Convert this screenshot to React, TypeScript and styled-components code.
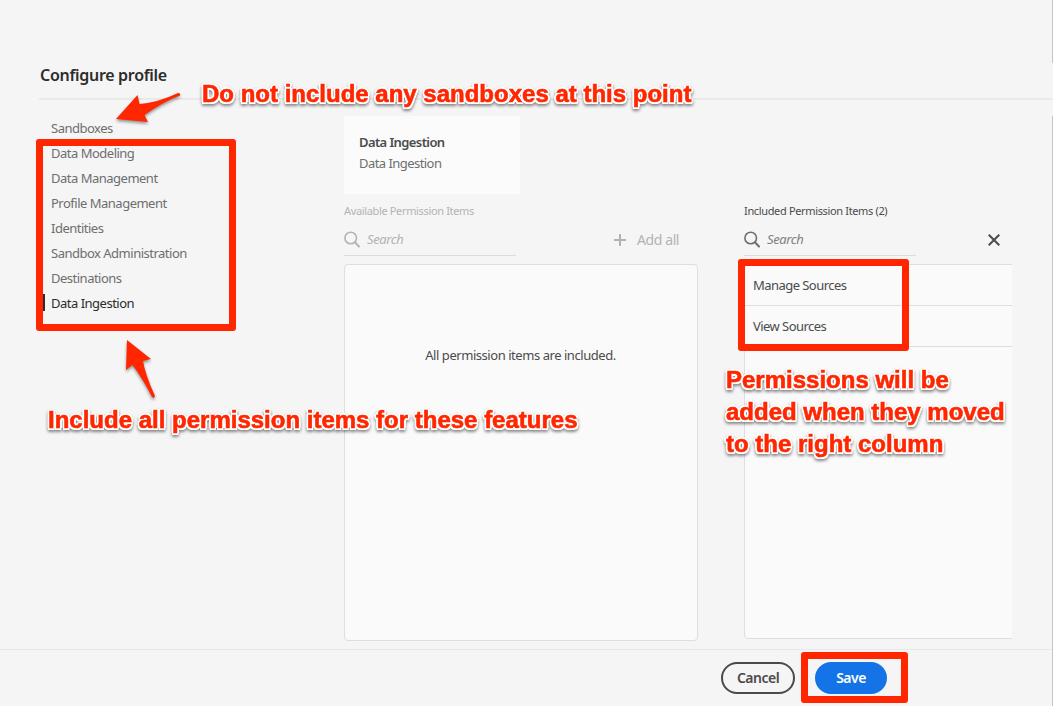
import React from "react";
import styled, { createGlobalStyle } from "styled-components";

const GlobalStyle = createGlobalStyle`
  * { box-sizing: border-box; }
  body { margin: 0; background: #f5f5f5; font-family: "Noto Sans", sans-serif; overflow: hidden; }
`;

const Page = styled.div`
  position: relative;
  display: flex;
  flex-direction: column;
  width: 1053px;
  height: 706px;
  overflow: hidden;
  background: #f5f5f5;
  color: #4b4b4b;
`;

const Header = styled.header`
  flex: none;
  height: 100px;
  margin-left: 39px;
  padding: 64px 0 0 1px;
  border-bottom: 2px solid #e9e9e9;
`;

const Title = styled.h1`
  margin: 0;
  font-size: 16px;
  line-height: 22px;
  font-weight: 600;
  letter-spacing: -0.3px;
  color: #2c2c2c;
`;

const Body = styled.main`
  flex: 1;
  display: flex;
  min-height: 0;
  padding: 16px 41px 0 43px;
`;

const Nav = styled.nav`
  flex: none;
  width: 301px;
  display: flex;
  flex-direction: column;
  align-items: flex-start;
`;

const NavItem = styled.a<{ $active?: boolean }>`
  display: flex;
  align-items: center;
  height: 17px;
  margin-bottom: 8px;
  padding-left: 6px;
  border-left: 2px solid ${(p) => (p.$active ? "#2c2c2c" : "transparent")};
  color: ${(p) => (p.$active ? "#2c2c2c" : "#6e6e6e")};
  font-size: 13px;
  letter-spacing: -0.5px;
  white-space: nowrap;
  &:first-child { margin-top: 3px; }
`;

const Content = styled.section`
  flex: 1;
  min-width: 0;
`;

const Card = styled.div`
  width: 176px;
  height: 78px;
  padding: 16px 15px;
  background: #fbfbfb;
  font-size: 13px;
  line-height: 21px;
  letter-spacing: -0.55px;
  color: #6e6e6e;
`;

const CardTitle = styled.div`
  font-weight: 600;
  letter-spacing: -0.6px;
  color: #4b4b4b;
`;

const Columns = styled.div`
  display: flex;
  gap: 46px;
`;

const Column = styled.div<{ $muted?: boolean }>`
  flex: none;
  width: 354px;
  color: ${(p) => (p.$muted ? "#b3b3b3" : "#4b4b4b")};
`;

const ColumnLabel = styled.div`
  height: 16px;
  margin-top: 9px;
  font-size: 11px;
  line-height: 16px;
  letter-spacing: -0.35px;
`;

const Tools = styled.div`
  display: flex;
  height: 37px;
  margin-bottom: 8px;
`;

const SearchField = styled.label<{ $muted?: boolean }>`
  display: flex;
  align-items: center;
  gap: 7px;
  width: 172px;
  padding-top: 5px;
  border-bottom: 1px solid #dcdcdc;
  font-size: 13px;
  font-style: italic;
  letter-spacing: -0.4px;
  color: ${(p) => (p.$muted ? "#b3b3b3" : "#808080")};
`;

const SearchText = styled.span`
  padding-bottom: 2px;
`;

const ToolAction = styled.div`
  display: flex;
  align-items: center;
  gap: 11px;
  margin-left: 98px;
  padding-top: 4px;
  font-size: 14px;
  letter-spacing: -0.4px;
`;

const ClearAction = styled(ToolAction)`
  margin-left: 72px;
`;

const Panel = styled.div<{ $h: number }>`
  height: ${(p) => p.$h}px;
  border: 1px solid #dedede;
  border-radius: 4px;
  background: #fafafa;
  color: #4b4b4b;
  font-size: 13px;
  letter-spacing: -0.45px;
`;

const Empty = styled.div`
  padding: 81px 1px 0 0;
  line-height: 18px;
  text-align: center;
`;

const Item = styled.div`
  height: 41px;
  padding-left: 8px;
  border-bottom: 1px solid #dedede;
  line-height: 40px;
  letter-spacing: -0.55px;
`;

const Clip = styled.div`
  width: 268px;
  overflow: hidden;
`;

const Footer = styled.footer`
  flex: none;
  display: flex;
  gap: 20px;
  height: 57px;
  padding: 12px 0 0 721px;
  border-top: 1px solid #e8e8e8;
`;

const Button = styled.button<{ $primary?: boolean }>`
  width: ${(p) => (p.$primary ? 72 : 74)}px;
  height: 32px;
  padding: 0;
  border: 2px solid ${(p) => (p.$primary ? "#1473e6" : "#4b4b4b")};
  border-radius: 16px;
  background: ${(p) => (p.$primary ? "#1473e6" : "transparent")};
  color: ${(p) => (p.$primary ? "#fff" : "#4b4b4b")};
  font: 600 14px/26px "Noto Sans", sans-serif;
  letter-spacing: -0.5px;
`;

const WindowEdge = styled.div<{ $y: number; $h: number }>`
  position: absolute;
  right: 0;
  top: ${(p) => p.$y}px;
  width: 1px;
  height: ${(p) => p.$h}px;
  background: #c4c4c4;
`;

const Highlight = styled.div<{ $x: number; $y: number; $w: number; $h: number }>`
  position: absolute;
  left: ${(p) => p.$x}px;
  top: ${(p) => p.$y}px;
  width: ${(p) => p.$w}px;
  height: ${(p) => p.$h}px;
  border: 7px solid #ff2600;
  border-radius: 3px;
`;

const Note = styled.div<{ $x: number; $y: number }>`
  position: absolute;
  left: ${(p) => p.$x}px;
  top: ${(p) => p.$y}px;
  font: 700 24px/32px "Liberation Sans", sans-serif;
  white-space: pre;
  color: #ff2600;
  -webkit-text-stroke: 0.6px #ff2600;
  text-shadow:
    2px 0 0 #fff, -2px 0 0 #fff, 0 2px 0 #fff, 0 -2px 0 #fff,
    1.5px 1.5px 0 #fff, -1.5px 1.5px 0 #fff, 1.5px -1.5px 0 #fff, -1.5px -1.5px 0 #fff;
  filter: drop-shadow(0 2px 1.5px rgba(0, 0, 0, 0.45));
`;

const Arrows = styled.svg`
  position: absolute;
  left: 0;
  top: 0;
  pointer-events: none;
  filter: drop-shadow(0 2px 1.5px rgba(0, 0, 0, 0.4));
`;

const SearchIcon = ({ color }: { color: string }) => (
  <svg width="16" height="17" viewBox="0 0 16 17" fill="none" stroke={color}>
    <circle cx="6.7" cy="7" r="5.8" strokeWidth="1.6" />
    <path d="M10.900 11.200 15 15.500" strokeWidth="2" strokeLinecap="round" />
  </svg>
);

const features = [
  "Sandboxes",
  "Data Modeling",
  "Data Management",
  "Profile Management",
  "Identities",
  "Sandbox Administration",
  "Destinations",
  "Data Ingestion",
];

export default function App() {
  return (
    <Page>
      <GlobalStyle />
      <Header>
        <Title>Configure profile</Title>
      </Header>
      <Body>
        <Nav>
          {features.map((name) => (
            <NavItem key={name} $active={name === "Data Ingestion"}>{name}</NavItem>
          ))}
        </Nav>
        <Content>
          <Card>
            <CardTitle>Data Ingestion</CardTitle>
            Data Ingestion
          </Card>
          <Columns>
            <Column $muted>
              <ColumnLabel>Available Permission Items</ColumnLabel>
              <Tools>
                <SearchField $muted>
                  <SearchIcon color="#b3b3b3" />
                  <SearchText>Search</SearchText>
                </SearchField>
                <ToolAction>
                  <svg width="12" height="12" viewBox="0 0 12 12" stroke="#b3b3b3" strokeWidth="2">
                    <path d="M6 0V12M0 6H12" />
                  </svg>
                  Add all
                </ToolAction>
              </Tools>
              <Panel $h={377}>
                <Empty>All permission items are included.</Empty>
              </Panel>
            </Column>
            <Clip>
              <Column>
                <ColumnLabel>Included Permission Items (2)</ColumnLabel>
                <Tools>
                  <SearchField>
                    <SearchIcon color="#6e6e6e" />
                    <SearchText>Search</SearchText>
                  </SearchField>
                  <ClearAction>
                    <svg width="12" height="12" viewBox="0 0 12 12" stroke="#4b4b4b" strokeWidth="2">
                      <path d="M.7.7 11.300 11.300M11.300.7.7 11.300" />
                    </svg>
                  </ClearAction>
                </Tools>
                <Panel $h={375}>
                  <Item>Manage Sources</Item>
                  <Item>View Sources</Item>
                </Panel>
              </Column>
            </Clip>
          </Columns>
        </Content>
      </Body>
      <Footer>
        <Button>Cancel</Button>
        <Button $primary>Save</Button>
      </Footer>

      <WindowEdge $y={0} $h={63} />
      <WindowEdge $y={116} $h={590} />
      <Highlight $x={36} $y={139} $w={200} $h={192} />
      <Highlight $x={738} $y={259} $w={171} $h={92} />
      <Highlight $x={801} $y={652} $w={107} $h={51} />
      <Arrows width="1053" height="706" fill="#ff2600">
        <path d="M116 119 137.500 95 139.500 104Q158 102.500 178 93Q181 93 180 95.500Q163 102 144.500 115L148 122Z" />
        <path d="M127 340 151 359 143 361Q145 374 155 396Q154 399 152 397Q143 379 132.500 365L126 370Z" />
      </Arrows>
      <Note $x={202} $y={78}>Do not include any sandboxes at this point</Note>
      <Note $x={48} $y={404}>Include all permission items for these features</Note>
      <Note $x={726} $y={364}>{"Permissions will be\nadded when they moved\nto the right column"}</Note>
    </Page>
  );
}
